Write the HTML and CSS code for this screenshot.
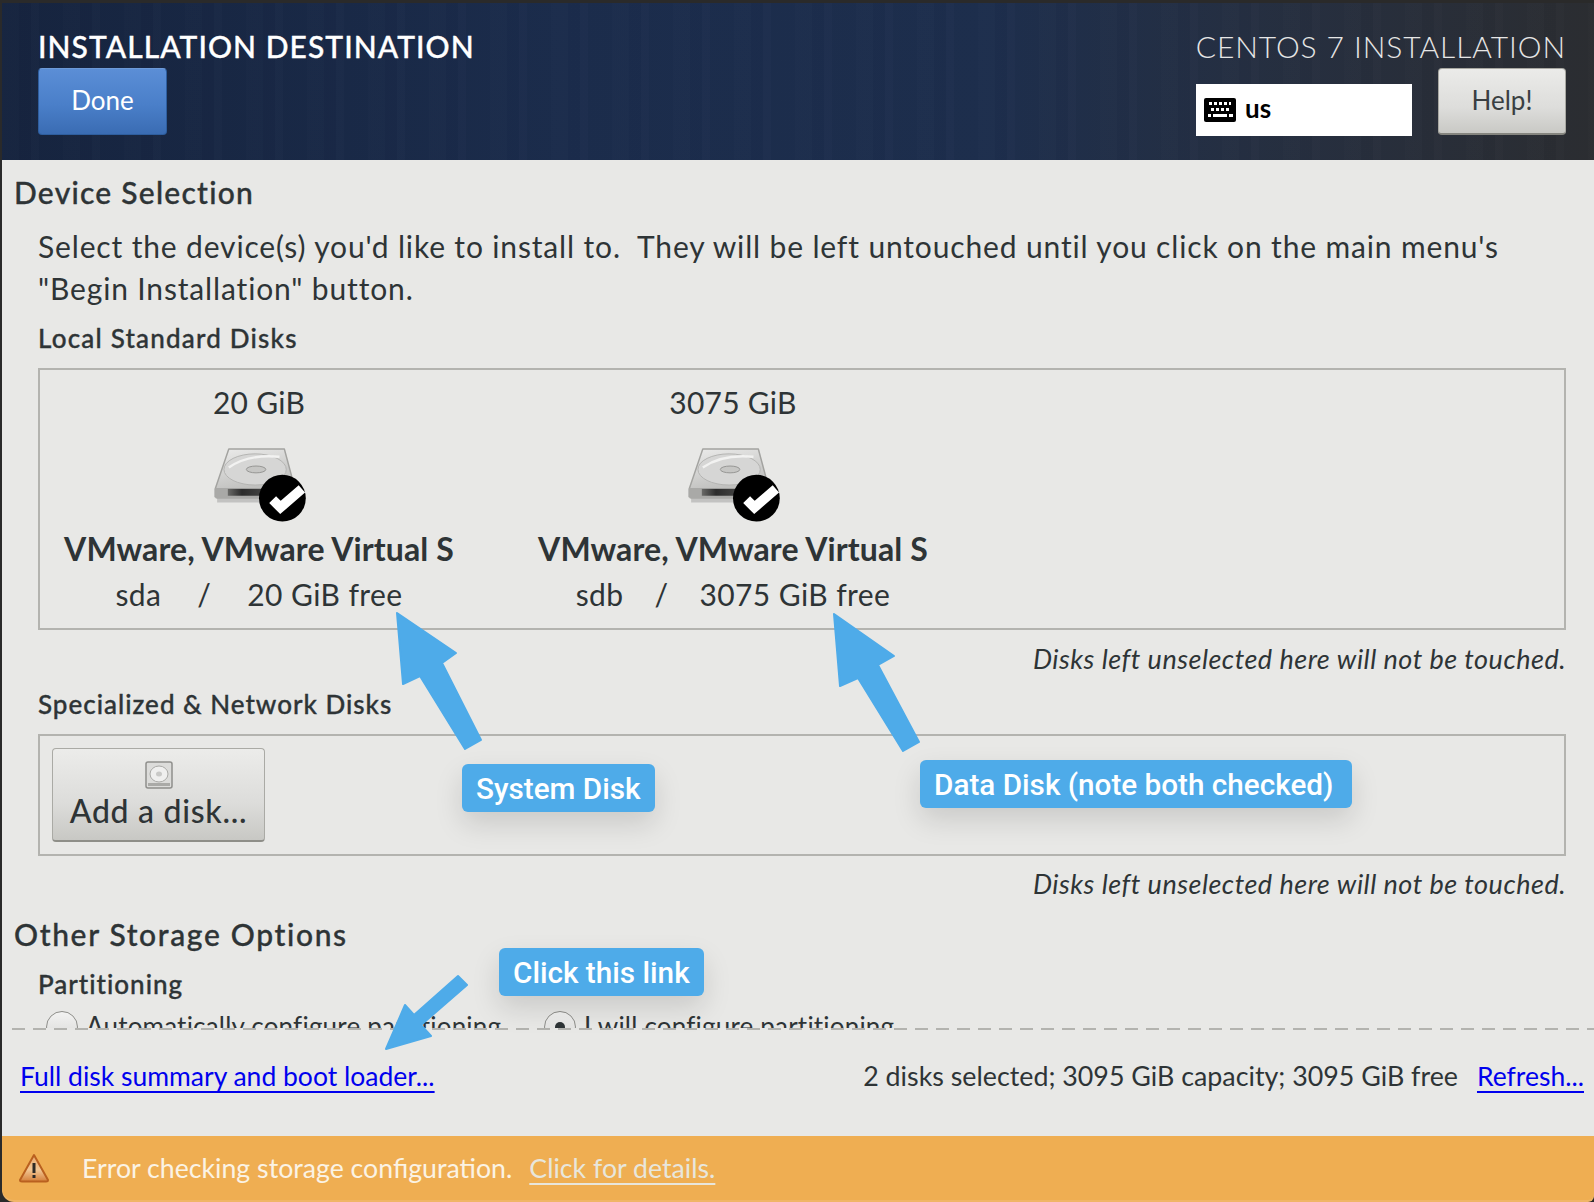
FILE: index.html
```html
<!DOCTYPE html>
<html lang="en">
<head>
<meta charset="utf-8">
<title>Installation Destination</title>
<link rel="stylesheet" href="styles.css">
</head>
<body>
<svg class="defs" aria-hidden="true">
  <defs>
    <linearGradient id="plate" x1="0" y1="0" x2="0.35" y2="1"><stop offset="0" stop-color="#ececeb"/><stop offset="1" stop-color="#b9b9b7"/></linearGradient>
    <linearGradient id="front" x1="0" y1="0" x2="1" y2="0"><stop offset="0" stop-color="#6a6a68"/><stop offset="0.25" stop-color="#2c2c2c"/><stop offset="1" stop-color="#5a5a58"/></linearGradient>
    <linearGradient id="warnfill" x1="0" y1="0" x2="0" y2="1"><stop offset="0" stop-color="#e9a86c"/><stop offset="0.55" stop-color="#f2c795"/><stop offset="1" stop-color="#d5803a"/></linearGradient>
    <symbol id="disk" viewBox="0 0 90 78" overflow="visible">
      <path d="M1 47H82V54H1Z" fill="#000" opacity=".16" transform="translate(1 2)"/>
      <path d="M14 1H71L82 42V50H0V42Z" fill="url(#plate)" stroke="#a3a3a0" stroke-width="1.5" stroke-linejoin="round"/>
      <ellipse cx="41" cy="22" rx="32" ry="16" fill="#d6d6d5" stroke="#b4b4b2"/>
      <path d="M14 20Q34 6 66 9" fill="none" stroke="#f2f2f1" stroke-width="2.5"/>
      <ellipse cx="42" cy="22" rx="10" ry="3.5" fill="#c6c6c4" stroke="#949492"/>
      <path d="M0 41H82V50Q82 52 80 52H2Q0 52 0 50Z" fill="#a9a9a7"/>
      <rect x="13" y="42" width="58" height="7" fill="url(#front)"/>
      <circle cx="69" cy="51.5" r="24" fill="#000"/>
      <path d="M59 53 L67 61 L89 42" fill="none" stroke="#fff" stroke-width="10"/>
    </symbol>
  </defs>
</svg>
<div class="window">
  <header class="topbar">
    <div class="top-left">
      <h1 class="title">INSTALLATION DESTINATION</h1>
      <button class="btn-done">Done</button>
    </div>
    <div class="top-right">
      <div class="product">CENTOS 7 INSTALLATION</div>
      <div class="top-controls">
        <div class="layout-box">
          <svg class="kbd" viewBox="0 0 32 24" aria-hidden="true">
            <rect width="32" height="24" rx="2" fill="#000"/>
            <g fill="#fff">
              <rect x="5" y="4" width="3" height="3"/><rect x="10" y="4" width="3" height="3"/><rect x="15" y="4" width="3" height="3"/><rect x="20" y="4" width="3" height="3"/><rect x="25" y="4" width="2" height="3"/>
              <rect x="7" y="10" width="3" height="3"/><rect x="12" y="10" width="3" height="3"/><rect x="17" y="10" width="3" height="3"/><rect x="22" y="10" width="3" height="3"/>
              <rect x="4" y="16" width="3" height="3"/><rect x="9" y="16" width="14" height="3"/><rect x="25" y="16" width="4" height="3"/>
            </g>
          </svg>
          <span class="layout-name">us</span>
        </div>
        <button class="btn-help">Help!</button>
      </div>
    </div>
  </header>

  <main class="content">
    <div class="scroll">
      <h2 class="section">Device Selection</h2>
      <p class="desc">Select the device(s) you'd like to install to.&nbsp; They will be left untouched until you click on the main menu's "Begin Installation" button.</p>
      <h3 class="sub sub-local">Local Standard Disks</h3>
      <div class="disk-box">
        <div class="disk">
          <div class="disk-size">20 GiB</div>
          <svg class="disk-icon" aria-hidden="true"><use href="#disk"/></svg>
          <div class="disk-model">VMware, VMware Virtual S</div>
          <div class="disk-info"><span>sda</span><span>/</span><span>20 GiB free</span></div>
        </div>
        <div class="disk">
          <div class="disk-size">3075 GiB</div>
          <svg class="disk-icon" aria-hidden="true"><use href="#disk"/></svg>
          <div class="disk-model">VMware, VMware Virtual S</div>
          <div class="disk-info disk-info-wide"><span>sdb</span><span>/</span><span>3075 GiB free</span></div>
        </div>
      </div>
      <p class="note">Disks left unselected here will not be touched.</p>
      <h3 class="sub sub-net">Specialized &amp; Network Disks</h3>
      <div class="net-box">
        <button class="btn-add">
          <svg class="add-icon" viewBox="0 0 30 28" aria-hidden="true">
            <rect x="2" y="1" width="26" height="26" rx="2" fill="#dcdcda" stroke="#8f8f8c" stroke-width="1.5"/>
            <ellipse cx="15" cy="13" rx="9" ry="8" fill="#efefee" stroke="#a9a9a6"/>
            <ellipse cx="15" cy="13" rx="3" ry="2.5" fill="#c9c9c7"/>
            <rect x="4" y="22" width="22" height="3" fill="#aaaaa7"/>
          </svg>
          <span class="add-label">Add a disk...</span>
        </button>
      </div>
      <p class="note note-2">Disks left unselected here will not be touched.</p>
      <h2 class="section section-other">Other Storage Options</h2>
      <h3 class="sub sub-part">Partitioning</h3>
      <div class="radios">
        <label class="radio radio-auto"><span class="dot"></span>Automatically configure partitioning</label>
        <label class="radio radio-manual"><span class="dot dot-on"></span>I will configure partitioning</label>
      </div>
    </div>
    <div class="footer">
      <a class="link" href="#">Full disk summary and boot loader...</a>
      <div class="summary">
        <span class="summary-text">2 disks selected; 3095 GiB capacity; 3095 GiB free</span>
        <a class="link" href="#">Refresh...</a>
      </div>
    </div>
  </main>

  <div class="warnbar">
    <svg class="warn-icon" viewBox="0 0 32 30" aria-hidden="true">
      <path d="M16 2 L30 27 Q30 28.5 28 28.5 H4 Q2 28.5 2 27 Z" fill="url(#warnfill)" stroke="#b9601f" stroke-width="2" stroke-linejoin="round"/>
      <rect x="14.5" y="10" width="3" height="10" fill="#2e2a26"/>
      <rect x="14.5" y="22" width="3" height="3" fill="#2e2a26"/>
    </svg>
    <span class="warn-text">Error checking storage configuration.</span>
    <a class="warn-link" href="#">Click for details.</a>
  </div>
</div>

<svg class="arrows" viewBox="0 0 1594 1202" aria-hidden="true">
  <g fill="#4eabe9" stroke="#4eabe9" stroke-width="2" stroke-linejoin="round">
    <polygon points="397,613 456,653 442,663 481,740 465,749 420,676 403,684"/>
    <polygon points="834,614 894,656 878,665 919,742 903,751 858,678 840,686"/>
    <polygon points="386,1049 405,1005 414,1015 458,976 467,985 421,1025 431,1036"/>
  </g>
</svg>
<div class="callout callout-system">System Disk</div>
<div class="callout callout-data">Data Disk (note both checked)</div>
<div class="callout callout-link">Click this link</div>
</body>
</html>
```
FILE: styles.css
```css
* { box-sizing: border-box; }
html, body { margin: 0; padding: 0; }
body {
  position: relative;
  width: 1594px;
  height: 1202px;
  overflow: hidden;
  background: #2a2a2a;
  font-family: "Lato", "Noto Sans", sans-serif;
  color: #2e3436;
}
.defs { position: absolute; width: 0; height: 0; }
.window {
  display: flex;
  flex-direction: column;
  height: 1202px;
  padding: 3px 0 0 2px;
}
.topbar {
  height: 157px;
  flex: none;
  display: flex;
  justify-content: space-between;
  padding: 26px 28px 0 36px;
  background:
    repeating-linear-gradient(90deg, rgba(255,255,255,.008) 0 17px, rgba(0,0,0,.02) 17px 29px, rgba(255,255,255,.012) 29px 37px, rgba(0,0,0,.008) 37px 61px),
    linear-gradient(90deg, #16243f 0%, #1b2c4c 35%, #1d2e4d 62%, #252f42 78%, #2b2d31 100%);
}
.top-left, .top-right { display: flex; flex-direction: column; }
.top-right { align-items: flex-end; }
.title {
  margin: 0;
  font-size: 30px;
  line-height: 34px;
  font-weight: 500;
  letter-spacing: 1.05px;
  -webkit-text-stroke: .35px #fff;
  color: #fff;
}
.btn-done {
  margin-top: 5px;
  width: 129px;
  height: 67px;
  padding: 0 0 4px;
  border: 1px solid #2e5e9e;
  border-top-color: #6d9ad8;
  border-radius: 4px;
  background: linear-gradient(180deg, #5b8ed6 0%, #4a7fc9 55%, #3a6cb3 100%);
  color: #fff;
  font: 400 26px "Lato", sans-serif;
}
.product {
  font-size: 30px;
  line-height: 34px;
  font-weight: 300;
  letter-spacing: .92px;
  color: #e6e6e6;
}
.top-controls { display: flex; align-items: flex-start; gap: 26px; margin-top: 5px; }
.layout-box {
  margin-top: 16px;
  width: 216px;
  height: 52px;
  display: flex;
  align-items: center;
  gap: 9px;
  padding-left: 8px;
  background: #fff;
  color: #000;
}
.kbd { width: 32px; height: 24px; }
.layout-name { font-size: 26px; font-weight: 700; line-height: 1; padding-bottom: 5px; }
.btn-help {
  width: 128px;
  height: 67px;
  padding: 0 0 3px;
  border: 1px solid #a8a8a2;
  border-bottom: 2px solid #85857f;
  border-radius: 4px;
  background: linear-gradient(180deg, #ebebe9 0%, #dddddb 60%, #c9c9c5 100%);
  color: #3a3f42;
  font: 400 26px "Lato", sans-serif;
}
.content {
  flex: 1;
  display: flex;
  flex-direction: column;
  min-height: 0;
  background: #e8e8e6;
}
.scroll {
  height: 868px;
  flex: none;
  overflow: hidden;
  padding: 12px 28px 0 12px;
}
.section {
  margin: 0;
  font-size: 30px;
  line-height: 40px;
  font-weight: 500;
  letter-spacing: 1.25px;
  -webkit-text-stroke: .35px #2e3436;
}
.desc {
  margin: 13px 0 0 24px;
  font-size: 30px;
  line-height: 42px;
  font-weight: 400;
  letter-spacing: .85px;
}
.sub {
  margin: 10px 0 0 24px;
  font-size: 26px;
  line-height: 38px;
  font-weight: 500;
  letter-spacing: 1px;
  -webkit-text-stroke: .35px #2e3436;
}
.sub-local { letter-spacing: 1.2px; }
.disk-box {
  margin: 11px 0 0 24px;
  height: 262px;
  border: 2px solid #b3b3af;
  display: flex;
  gap: 36px;
  padding-top: 12px;
}
.disk { width: 438px; display: flex; flex-direction: column; align-items: center; }
.disk-size { font-size: 30px; line-height: 40px; letter-spacing: .25px; }
.disk-icon { margin-top: 26px; flex: none; width: 90px; height: 76px; overflow: visible; }
.disk-model { margin-top: 5px; font-size: 32px; line-height: 40px; font-weight: 700; letter-spacing: .1px; }
.disk-info { margin-top: 5px; display: flex; gap: 36px; font-size: 30px; line-height: 40px; letter-spacing: .4px; }
.disk-info-wide { gap: 31px; }
.note {
  margin: 9px 0 0;
  text-align: right;
  font-size: 27px;
  line-height: 40px;
  font-style: italic;
  letter-spacing: .5px;
}
.note-2 { margin-top: 8px; }
.sub-net { margin-top: 6px; }
.net-box {
  margin: 11px 0 0 24px;
  height: 122px;
  border: 2px solid #b3b3af;
  padding: 12px;
}
.btn-add {
  width: 213px;
  height: 94px;
  display: flex;
  flex-direction: column;
  align-items: center;
  padding: 12px 0 0;
  border: 1px solid #aaaaa5;
  border-bottom: 2px solid #8e8e88;
  border-radius: 4px;
  background: linear-gradient(180deg, #ececea 0%, #dcdcda 60%, #c8c8c4 100%);
  color: #2e3436;
  font: 500 32px/38px "Lato", sans-serif;
  letter-spacing: .7px;
}
.add-icon { width: 30px; height: 28px; flex: none; }
.add-label { margin-top: 3px; }
.section-other { margin-top: 10px; letter-spacing: 1.65px; }
.sub-part { margin: 11px 0 0 24px; }
.radios { display: flex; margin: 8px 0 0 32px; }
.radio { display: flex; align-items: flex-start; font-size: 26px; line-height: 31px; letter-spacing: .2px; white-space: nowrap; }
.radio-auto { width: 498px; }
.dot {
  flex: none;
  width: 32px;
  height: 32px;
  margin: 0 8px 0 0;
  border: 1.5px solid #8e8e8a;
  border-radius: 50%;
  background: linear-gradient(180deg, #f3f3f2, #d8d8d6);
  position: relative;
}
.dot-on::after {
  content: "";
  position: absolute;
  left: 10px;
  top: 10px;
  width: 10px;
  height: 10px;
  border-radius: 50%;
  background: #2e3436;
}
.footer {
  flex: 1;
  display: flex;
  justify-content: space-between;
  align-items: flex-start;
  margin-left: 10px;
  padding: 28px 10px 0 8px;
  background:
    repeating-linear-gradient(90deg, #b3b3af 0 13px, transparent 13px 21px) top left / 100% 2px no-repeat;
}
.link {
  color: #0000ee;
  font-size: 26.5px;
  line-height: 40px;
  text-decoration: underline;
  text-decoration-thickness: 2px;
  text-underline-offset: 5px;
}
.summary { display: flex; gap: 19px; }
.summary-text { font-size: 26.8px; line-height: 40px; }
.warnbar {
  height: 64px;
  flex: none;
  margin-bottom: 2px;
  display: flex;
  align-items: center;
  padding-left: 16px;
  background: #efae52;
  color: #fbf3e4;
  font-size: 26.7px;
  border-bottom-left-radius: 12px;
  border-bottom-right-radius: 6px;
  box-shadow: 0 2px 0 #f0b566;
}
.warn-icon { width: 32px; height: 30px; flex: none; }
.warn-text { margin-left: 32px; }
.warn-link {
  margin-left: 17px;
  color: #e8e6dc;
  text-decoration: underline;
  text-decoration-thickness: 2px;
  text-underline-offset: 5px;
}
.arrows { position: absolute; left: 0; top: 0; width: 1594px; height: 1202px; pointer-events: none; }
.callout {
  position: absolute;
  height: 48px;
  display: flex;
  align-items: center;
  padding: 0 14px;
  border-radius: 6px;
  background: #4eabe9;
  color: #fff;
  font: 500 29.7px "Roboto", sans-serif;
  box-shadow: 0 12px 28px rgba(0, 0, 0, .13);
  white-space: nowrap;
}
.callout-system { left: 462px; top: 764px; width: 193px; }
.callout-data { left: 920px; top: 760px; width: 432px; }
.callout-link { left: 499px; top: 948px; width: 205px; }
```
